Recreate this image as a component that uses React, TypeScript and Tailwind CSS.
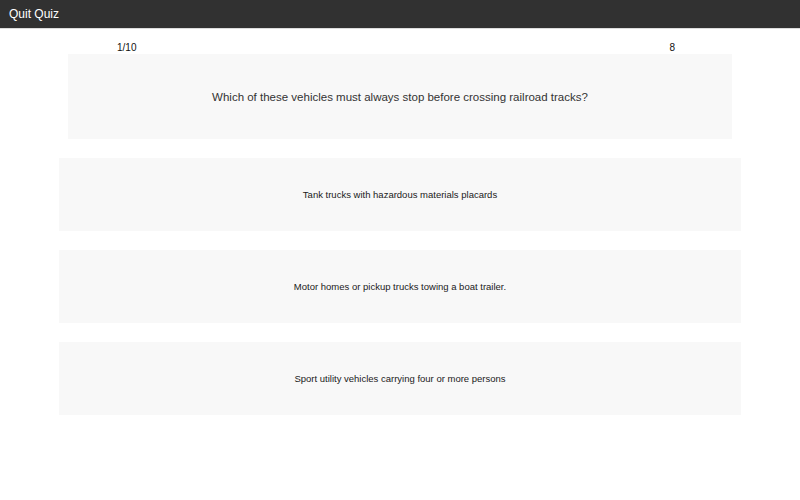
export default function App() {
  const answers = [
    "Tank trucks with hazardous materials placards",
    "Motor homes or pickup trucks towing a boat trailer.",
    "Sport utility vehicles carrying four or more persons",
  ];
  return (
    <div className="w-[800px] h-[500px] bg-white" style={{ fontFamily: '"Liberation Sans", Arial, sans-serif' }}>
      <div className="h-[29px] bg-[#313131] border-b border-[#dcdcdc] flex items-center pl-[9px]">
        <span className="text-white text-[12px]">Quit Quiz</span>
      </div>
      <div className="px-[59px]">
        <div className="mx-[9px] flex justify-between pl-[49px] pr-[57px] pt-[13px] h-[25px] text-[10px] text-[#111] leading-[12px]">
          <span>1/10</span>
          <span>8</span>
        </div>
        <div className="mx-[9px] h-[85px] bg-[#f8f8f8] flex items-center justify-center pt-[3px]">
          <span className="text-[11.5px] text-[#333]">Which of these vehicles must always stop before crossing railroad tracks?</span>
        </div>
        <div className="mt-[19px] flex flex-col gap-[19px]">
          {answers.map((a) => (
            <div key={a} className="h-[73px] bg-[#f8f8f8] flex items-center justify-center pt-[2px]">
              <span className="text-[9.5px] text-[#1a1a1a]">{a}</span>
            </div>
          ))}
        </div>
      </div>
    </div>
  );
}
